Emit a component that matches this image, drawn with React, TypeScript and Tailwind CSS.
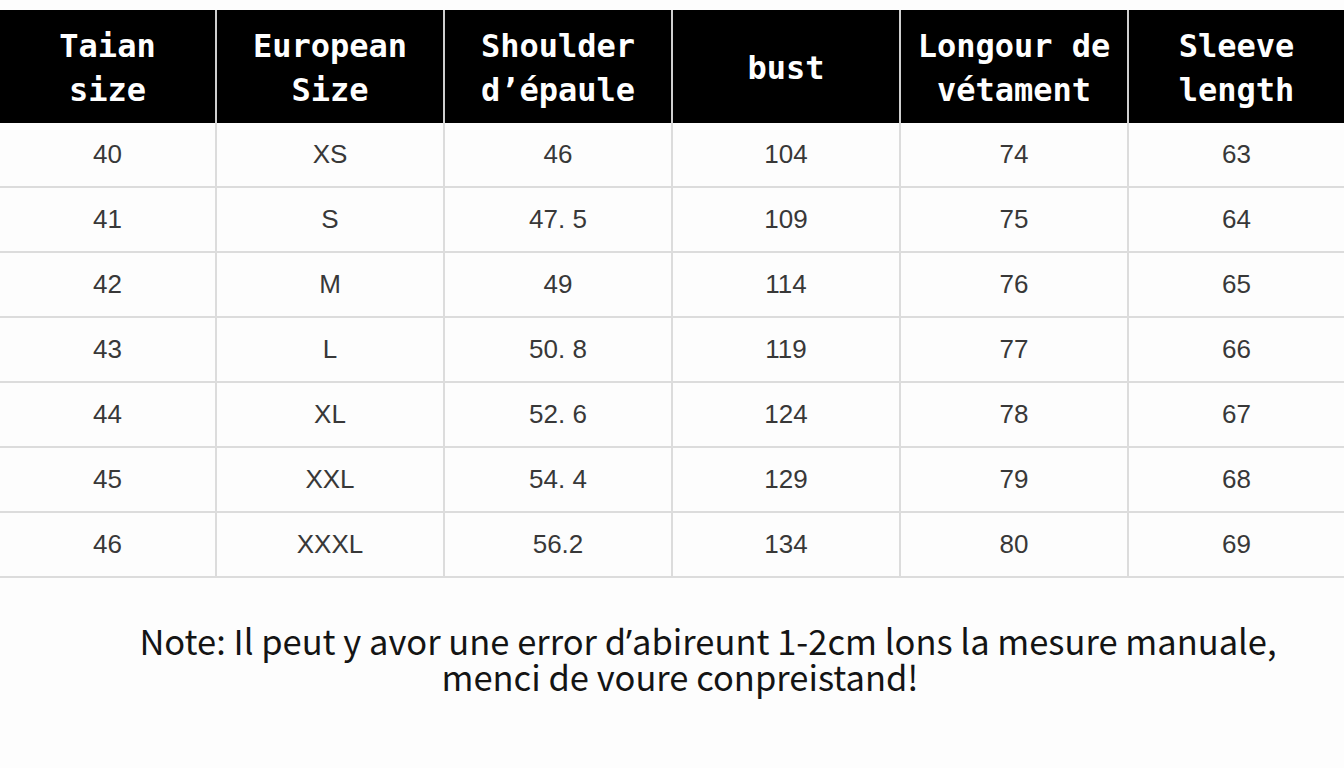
const headers = [
  ["Taian", "size"],
  ["European", "Size"],
  ["Shoulder", "d’épaule"],
  ["bust"],
  ["Longour de", "vétament"],
  ["Sleeve", "length"],
];

const rows = [
  ["40", "XS", "46", "104", "74", "63"],
  ["41", "S", "47. 5", "109", "75", "64"],
  ["42", "M", "49", "114", "76", "65"],
  ["43", "L", "50. 8", "119", "77", "66"],
  ["44", "XL", "52. 6", "124", "78", "67"],
  ["45", "XXL", "54. 4", "129", "79", "68"],
  ["46", "XXXL", "56.2", "134", "80", "69"],
];

const cols = "grid grid-cols-[215px_228px_228px_228px_228px_217px]";

export default function App() {
  return (
    <main className="h-[768px] w-[1344px] overflow-hidden bg-[#fdfdfd] pt-[10px]">
      <div className={`${cols} h-[113px] bg-black`}>
        {headers.map((lines, i) => (
          <div
            key={i}
            className={`flex flex-col items-center justify-center pt-[2px] text-[32px] leading-[44px] font-bold text-white font-['DejaVu_Sans_Mono',monospace] ${
              i > 0 ? "border-l-2 border-[#cfcfcf]" : ""
            }`}
          >
            {lines.map((l) => (
              <span key={l} className="whitespace-pre">
                {l}
              </span>
            ))}
          </div>
        ))}
      </div>
      {rows.map((row, r) => (
        <div key={r} className={`${cols} h-[65px] border-b-2 border-[#dcdcdc]`}>
          {row.map((v, i) => (
            <div
              key={i}
              className={`flex items-center justify-center text-[26px] text-[#383838] font-['Liberation_Sans',sans-serif] ${
                i > 0 ? "border-l-2 border-[#dcdcdc]" : ""
              }`}
            >
              <span className="whitespace-pre">{v}</span>
            </div>
          ))}
        </div>
      ))}
      <div className="mt-[44px] flex flex-col items-center text-[34.5px] leading-[36px] text-[#141414] font-['Noto_Sans_CJK_SC','Noto_Sans',sans-serif]">
        <p className="pl-[72px]">
          Note: Il peut y avor une error d<span className="font-['Noto_Sans',sans-serif]">’</span>abireunt 1-2cm lons la mesure manuale,
        </p>
        <p className="-mt-[2px] pl-[16px]">menci de voure conpreistand!</p>
      </div>
    </main>
  );
}
